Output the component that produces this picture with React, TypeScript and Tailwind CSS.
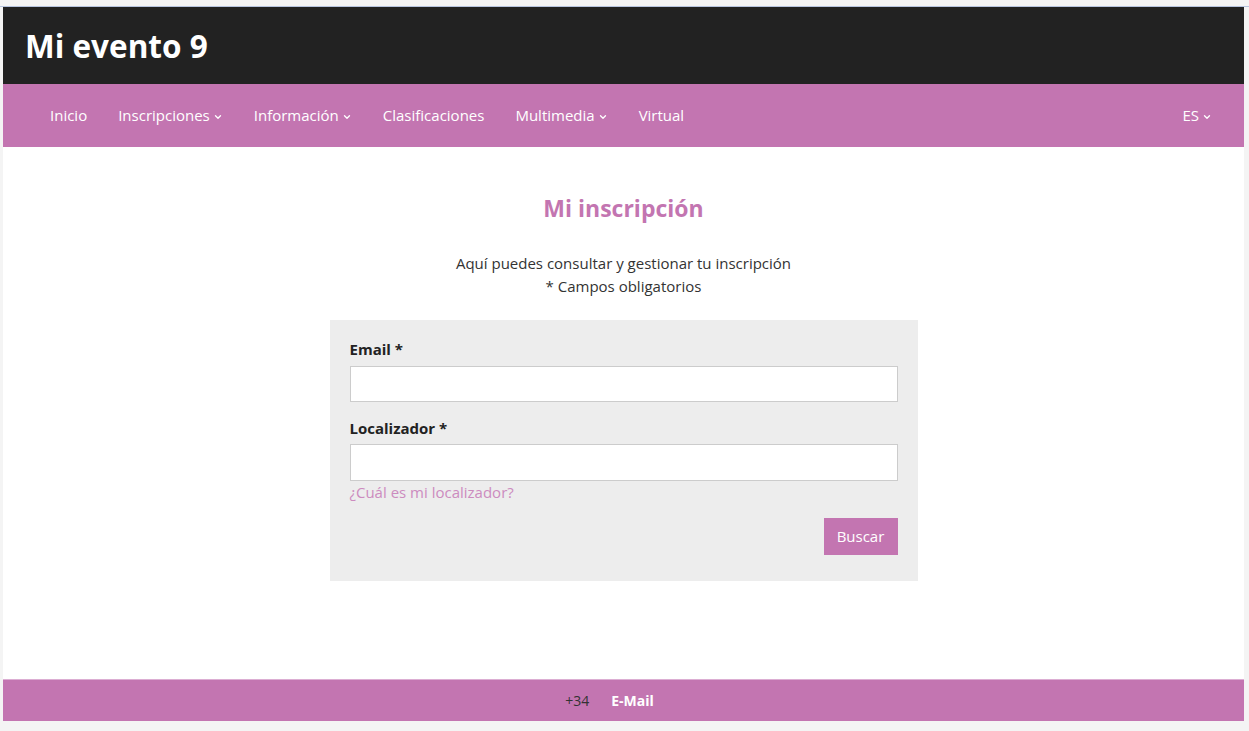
import { ChevronDown } from "lucide-react";

const navItems = [
  { label: "Inicio", dropdown: false },
  { label: "Inscripciones", dropdown: true },
  { label: "Información", dropdown: true },
  { label: "Clasificaciones", dropdown: false },
  { label: "Multimedia", dropdown: true },
  { label: "Virtual", dropdown: false },
];

const NavLink = ({ label, dropdown }: { label: string; dropdown: boolean }) => (
  <a href="#" className="flex items-center gap-[3px] text-[15px] text-white">
    {label}
    {dropdown && <ChevronDown size={10} strokeWidth={3.2} className="mt-[2px]" />}
  </a>
);

const App = () => {
  return (
    <div
      className="flex h-[731px] flex-col bg-[#f4f4f4]"
      style={{ fontFamily: '"Open Sans", "Liberation Sans", sans-serif' }}
    >
      <div className="h-[7px] shrink-0 border-b border-[#b7c4de]" />
      <div className="ml-[3px] mr-[5px] flex flex-1 flex-col bg-white">
        <header className="flex h-[77px] items-center bg-[#222222] px-[22px]">
          <h1 className="text-[31.5px] font-bold leading-none text-white">Mi evento 9</h1>
        </header>

        <nav className="flex h-[63px] items-center bg-[#c375b1] pl-[47px] pr-[32px]">
          <div className="flex items-center gap-[31px]">
            {navItems.map((item) => (
              <NavLink key={item.label} {...item} />
            ))}
          </div>
          <div className="ms-auto">
            <NavLink label="ES" dropdown />
          </div>
        </nav>

        <main className="flex flex-1 flex-col items-center pt-[46px]">
          <h2 className="text-[23px] font-bold leading-[30px] text-[#c375b1]">Mi inscripción</h2>
          <div className="mt-[29px] text-center text-[15px] leading-[23px] text-[#333333]">
            <p>Aquí puedes consultar y gestionar tu inscripción</p>
            <p>* Campos obligatorios</p>
          </div>

          <form className="mt-[22px] flex w-[588px] flex-col bg-[#ededed] px-[20px] pb-[26px] pt-[19px]">
            <label className="text-[15px] font-bold leading-[20px] text-[#222222]">Email *</label>
            <input
              type="email"
              className="mt-[7px] h-[36px] w-full border border-[#cccccc] bg-white px-2"
            />
            <label className="mt-[16px] text-[15px] font-bold leading-[20px] text-[#222222]">
              Localizador *
            </label>
            <input
              type="text"
              className="mt-[6px] h-[37px] w-full border border-[#cccccc] bg-white px-2"
            />
            <a href="#" className="mt-[1px] text-[15px] leading-[20px] text-[#cc8bbf]">
              ¿Cuál es mi localizador?
            </a>
            <div className="mt-[16px] flex justify-end">
              <button
                type="button"
                className="h-[37px] w-[74px] bg-[#c375b1] text-[15px] text-white"
              >
                Buscar
              </button>
            </div>
          </form>
        </main>

        <footer className="flex h-[42px] items-center justify-center gap-[22px] border-t border-[#dcaed3] bg-[#c375b1] pr-[28px] text-[14px]">
          <span className="text-[#333333]">+34</span>
          <a href="#" className="font-bold text-white">
            E-Mail
          </a>
        </footer>
      </div>
      <div className="h-[10px] shrink-0" />
    </div>
  );
};

export default App;
